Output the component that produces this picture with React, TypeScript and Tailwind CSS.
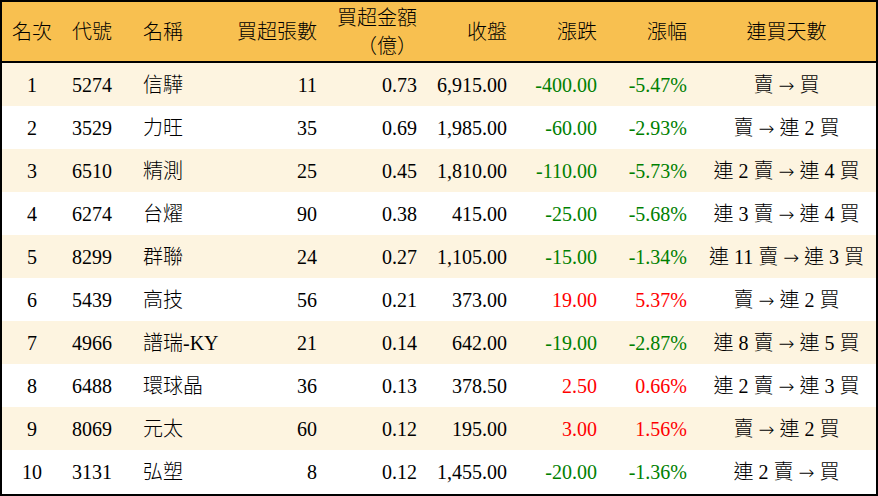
import React from 'react';

type Row = {
  rank: number;
  code: string;
  name: string;
  lots: number;
  amount: string;
  close: string;
  change: string;
  pct: string;
  streak: [string, string];
};

const rows: Row[] = [
  { rank: 1, code: '5274', name: '信驊', lots: 11, amount: '0.73', close: '6,915.00', change: '-400.00', pct: '-5.47%', streak: ['賣', '買'] },
  { rank: 2, code: '3529', name: '力旺', lots: 35, amount: '0.69', close: '1,985.00', change: '-60.00', pct: '-2.93%', streak: ['賣', '連 2 買'] },
  { rank: 3, code: '6510', name: '精測', lots: 25, amount: '0.45', close: '1,810.00', change: '-110.00', pct: '-5.73%', streak: ['連 2 賣', '連 4 買'] },
  { rank: 4, code: '6274', name: '台燿', lots: 90, amount: '0.38', close: '415.00', change: '-25.00', pct: '-5.68%', streak: ['連 3 賣', '連 4 買'] },
  { rank: 5, code: '8299', name: '群聯', lots: 24, amount: '0.27', close: '1,105.00', change: '-15.00', pct: '-1.34%', streak: ['連 11 賣', '連 3 買'] },
  { rank: 6, code: '5439', name: '高技', lots: 56, amount: '0.21', close: '373.00', change: '19.00', pct: '5.37%', streak: ['賣', '連 2 買'] },
  { rank: 7, code: '4966', name: '譜瑞-KY', lots: 21, amount: '0.14', close: '642.00', change: '-19.00', pct: '-2.87%', streak: ['連 8 賣', '連 5 買'] },
  { rank: 8, code: '6488', name: '環球晶', lots: 36, amount: '0.13', close: '378.50', change: '2.50', pct: '0.66%', streak: ['連 2 賣', '連 3 買'] },
  { rank: 9, code: '8069', name: '元太', lots: 60, amount: '0.12', close: '195.00', change: '3.00', pct: '1.56%', streak: ['賣', '連 2 買'] },
  { rank: 10, code: '3131', name: '弘塑', lots: 8, amount: '0.12', close: '1,455.00', change: '-20.00', pct: '-1.36%', streak: ['連 2 賣', '買'] },
];

const cols = 'grid grid-cols-[60px_71px_100px_94px_100px_90px_90px_90px_1fr]';

export default function App() {
  return (
    <div
      className="w-[878px] h-[496px] border-2 border-black bg-white text-black text-[20px] font-light"
      style={{ fontFamily: '"Liberation Serif", "Noto Sans CJK TC", serif' }}
    >
      <div className={`${cols} h-[61px] bg-[#f8c050] border-b-2 border-black items-center leading-[24px]`}>
        <div className="text-center">名次</div>
        <div className="pl-[10px]">代號</div>
        <div className="pl-[10px]">名稱</div>
        <div className="text-right pr-[10px]">買超張數</div>
        <div className="text-right pr-[10px] leading-[28px]">
          <div>買超金額</div>
          <div>（億）</div>
        </div>
        <div className="text-right pr-[10px]">收盤</div>
        <div className="text-right pr-[10px]">漲跌</div>
        <div className="text-right pr-[10px]">漲幅</div>
        <div className="text-center">連買天數</div>
      </div>
      {rows.map((r, i) => {
        const color = r.change.startsWith('-') ? 'text-[#008000]' : 'text-[#ff0000]';
        return (
          <div
            key={r.rank}
            className={`${cols} items-center ${i === 9 ? 'h-[44px]' : 'h-[43px]'} ${i % 2 === 0 ? 'bg-[#fdf4e0]' : 'bg-white'}`}
          >
            <div className="text-center">{r.rank}</div>
            <div className="pl-[10px]">{r.code}</div>
            <div className="pl-[10px] whitespace-nowrap">{r.name}</div>
            <div className="text-right pr-[10px]">{r.lots}</div>
            <div className="text-right pr-[10px]">{r.amount}</div>
            <div className="text-right pr-[10px]">{r.close}</div>
            <div className={`text-right pr-[10px] ${color}`}>{r.change}</div>
            <div className={`text-right pr-[10px] ${color}`}>{r.pct}</div>
            <div className="text-center whitespace-nowrap">
              {r.streak[0]}{' '}
              <span className="font-['DejaVu_Sans',sans-serif] text-[19px]">→</span>
              {' '}{r.streak[1]}
            </div>
          </div>
        );
      })}
    </div>
  );
}
